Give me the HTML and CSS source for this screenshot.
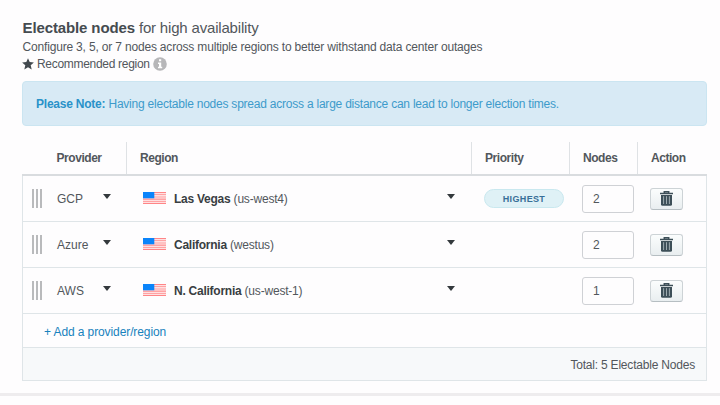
FILE: index.html
```
<!DOCTYPE html>
<html lang="en">
<head>
<meta charset="utf-8">
<title>Electable nodes</title>
<link rel="stylesheet" href="styles.css">
</head>
<body>
<svg class="defs" aria-hidden="true">
  <symbol id="flag" viewBox="0 0 23 12">
    <rect width="23" height="12" fill="#fff"/>
    <path d="M0 .6h23M0 2.8h23M0 5h23M0 7.1h23M0 9.3h23M0 11.4h23" stroke="#ff8587" stroke-width="1.1"/>
    <rect width="11.3" height="6.3" fill="#0b84fa"/>
  </symbol>
  <symbol id="trash" viewBox="0 0 13 15">
    <path d="M4.3 2V.7h4.4V2M0 2.6h13" fill="none" stroke="#3d4f58" stroke-width="1.5"/>
    <path d="M1 4h11v9.3q0 1.5-1.5 1.5h-8Q1 14.8 1 13.300z" fill="#3d4f58"/>
    <path d="M3.6 5.200v7.800M6.500 5.200v7.800M9.400 5.200v7.800" stroke="#a9b5ba" stroke-width=".9"/>
  </symbol>
</svg>
<main class="panel">
  <h1 class="title"><b>Electable nodes</b> for high availability</h1>
  <p class="subtitle">Configure 3, 5, or 7 nodes across multiple regions to better withstand data center outages</p>
  <p class="recommended">
    <svg class="star" viewBox="0 0 12 12"><path d="M6 .2l1.7 3.9 4.2.4-3.2 2.8 1 4.3L6 9.3l-3.7 2.3 1-4.3L.1 4.5l4.2-.4z" fill="#42494f"/></svg>
    <span class="rec-text">Recommended region</span>
    <svg class="info" viewBox="0 0 14 14"><circle cx="7" cy="7" r="6.8" fill="#b7b7b9"/><path d="M6 2.3h2.2v2H6zM5 5.6h3.2v4.2h1v1.5H5V9.8h1V7H5z" fill="#fff"/></svg>
  </p>
  <div class="note"><span><b>Please Note:</b> Having electable nodes spread across a large distance can lead to longer election times.</span></div>

  <div class="table">
    <div class="row head">
      <div class="cell h-provider">Provider</div>
      <div class="cell">Region</div>
      <div class="cell">Priority</div>
      <div class="cell">Nodes</div>
      <div class="cell">Action</div>
    </div>
    <div class="body">
      <div class="row">
        <div class="cell provider"><i class="grip"></i><span class="name">GCP</span><i class="caret"></i></div>
        <div class="cell region"><svg class="flag"><use href="#flag"/></svg><span class="place"><b>Las Vegas</b> (us-west4)</span><i class="caret"></i></div>
        <div class="cell"><span class="badge">HIGHEST</span></div>
        <div class="cell"><span class="count">2</span></div>
        <div class="cell"><span class="button"><svg class="trash"><use href="#trash"/></svg></span></div>
      </div>
      <div class="row">
        <div class="cell provider"><i class="grip"></i><span class="name">Azure</span><i class="caret"></i></div>
        <div class="cell region"><svg class="flag"><use href="#flag"/></svg><span class="place"><b>California</b> (westus)</span><i class="caret"></i></div>
        <div class="cell"></div>
        <div class="cell"><span class="count">2</span></div>
        <div class="cell"><span class="button"><svg class="trash"><use href="#trash"/></svg></span></div>
      </div>
      <div class="row">
        <div class="cell provider"><i class="grip"></i><span class="name">AWS</span><i class="caret"></i></div>
        <div class="cell region"><svg class="flag"><use href="#flag"/></svg><span class="place"><b>N. California</b> (us-west-1)</span><i class="caret"></i></div>
        <div class="cell"></div>
        <div class="cell"><span class="count">1</span></div>
        <div class="cell"><span class="button"><svg class="trash"><use href="#trash"/></svg></span></div>
      </div>
      <div class="add">+ Add a provider/region</div>
      <div class="total">Total: 5 Electable Nodes</div>
    </div>
  </div>
</main>
<hr class="divider">
</body>
</html>
```
FILE: styles.css
```
* { box-sizing: border-box; }
body {
  margin: 0;
  height: 405px;
  overflow: hidden;
  background: #fefdfe;
  color: #52575c;
  font: 12px/16px "Liberation Sans", Arial, sans-serif;
}
svg { display: block; }
.defs { position: absolute; width: 0; height: 0; }
.panel { padding: 18px 13px 0 22px; }
.title { margin: 0 0 0 .5px; font-size: 15px; line-height: 20px; font-weight: 400; letter-spacing: -.18px; white-space: nowrap; }
.title b { color: #454b50; letter-spacing: -.12px; }
.subtitle { margin: 1px 0 0 .5px; white-space: nowrap; letter-spacing: -.175px; }
.recommended { display: flex; align-items: center; margin: 1px 0 0; height: 16px; }
.star { width: 12px; height: 12px; }
.rec-text { margin: 0 3px 0 3px; letter-spacing: -.3px; }
.info { width: 14px; height: 14px; }
.note {
  display: flex;
  align-items: center;
  height: 45px;
  margin-top: 9px;
  padding-left: 13px;
  border: 1px solid #cbe5f1;
  border-radius: 4px;
  background: #d8eaf5;
  color: #3d9bcb;
  white-space: nowrap;
  letter-spacing: -.225px;
}
.note b { color: #2992c9; }
.table { margin-top: 16px; }
.row { display: grid; grid-template-columns: 104px 345px 98px 68px 1fr; height: 46px; border-bottom: 1px solid #dfe5e8; }
.cell { display: flex; align-items: center; padding-left: 13px; white-space: nowrap; }
.head { height: 34px; border-bottom: 2px solid #d9dcdf; font-weight: 700; letter-spacing: -.45px; }
.head .cell + .cell { border-left: 1px solid #dfe2e5; }
.head .h-provider { padding-left: 34.5px; }
.body { border: solid #dfe5e8; border-width: 0 1px 1px; }
.body .row { grid-template-columns: 103px 345px 98px 68px 1fr; }
.provider { padding-left: 9px; }
.grip { width: 10px; height: 19px; background: repeating-linear-gradient(90deg, #b9babc 0 2px, #fefdfe 2px 4px); }
.name { width: 46px; margin-left: 15px; }
.caret { width: 0; height: 0; margin-top: -4px; border: solid transparent; border-width: 5px 4px 0; border-top-color: #34393d; }
.region { padding-left: 17px; }
.flag { width: 23px; height: 12px; margin-top: -1px; }
.place { width: 273px; margin-left: 8px; letter-spacing: -.2px; }
.place b { color: #393e42; letter-spacing: -.25px; }
.badge { width: 80px; height: 19px; border: 1px solid #c9e8ef; border-radius: 10px; background: #dff1f6; color: #396f98; font-size: 9px; font-weight: 700; line-height: 18px; letter-spacing: .35px; text-align: center; }
.count { width: 52px; height: 28px; padding-left: 10px; border: 1px solid #cfd1d5; border-radius: 3px; line-height: 27px; }
.button { display: grid; place-items: center; width: 33px; height: 22px; border: 1px solid #cdd3d6; border-bottom-color: #b6bec2; border-radius: 3px; background: linear-gradient(#fbfdfd, #e9eef0); }
.trash { width: 13px; height: 15px; }
.add { height: 34px; padding-left: 21px; border-bottom: 1px solid #dfe5e8; color: #1882bd; line-height: 36px; letter-spacing: -.1px; }
.total { height: 32px; padding-right: 11px; background: #f7f9fa; line-height: 35px; text-align: right; letter-spacing: -.2px; }
.divider { height: 3px; margin: 12px 0 0; border: 0; background: #eeecee; }
```
